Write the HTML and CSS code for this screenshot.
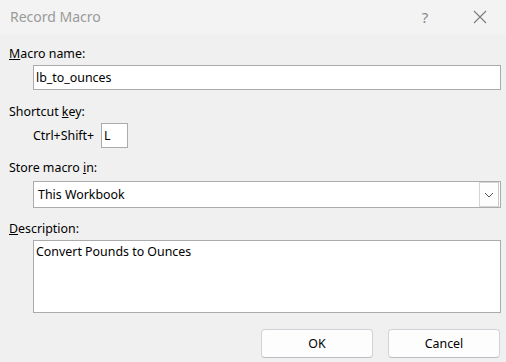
FILE: index.html
```html
<!DOCTYPE html>
<html>
<head>
<meta charset="utf-8">
<link rel="stylesheet" href="styles.css">
</head>
<body>
<div class="dialog">
  <div class="titlebar">
    <span class="title">Record Macro</span>
    <span class="help">?</span>
    <span class="close">
      <svg width="14" height="14" viewBox="0 0 14 14"><path d="M1 1 L13 13 M13 1 L1 13" stroke="#7a7a7a" stroke-width="1.1" fill="none"/></svg>
    </span>
  </div>
  <div class="content">
    <div class="label l1"><u>M</u>acro name:</div>
    <div class="field name">lb_to_ounces</div>
    <div class="label l2">Shortcut <u>k</u>ey:</div>
    <div class="shortcut">
      <span class="combo-text">Ctrl+Shift+</span>
      <div class="keybox">L</div>
    </div>
    <div class="label l3">Store macro <u>i</u>n:</div>
    <div class="field select">
      <span class="sel-text">This Workbook</span>
      <span class="drop">
        <svg width="10" height="6" viewBox="0 0 10 6"><path d="M1 1 L5 5 L9 1" stroke="#555" stroke-width="1" fill="none"/></svg>
      </span>
    </div>
    <div class="label l4"><u>D</u>escription:</div>
    <div class="field desc">Convert Pounds to Ounces</div>
    <div class="buttons">
      <div class="btn">OK</div>
      <div class="btn">Cancel</div>
    </div>
  </div>
</div>
</body>
</html>
```
FILE: styles.css
```css
html, body {
  margin: 0;
  padding: 0;
}
body {
  width: 506px;
  height: 362px;
  overflow: hidden;
  background: #f0f0f0;
  font-family: "Noto Sans", "Open Sans", sans-serif;
  font-size: 12.4px;
  color: #000;
}
.dialog {
  width: 506px;
  height: 362px;
  display: flex;
  flex-direction: column;
}
.titlebar {
  height: 34px;
  background: #f3f3f3;
  display: flex;
  align-items: center;
  padding-left: 10px;
  box-sizing: border-box;
}
.title {
  font-size: 14px;
  color: #9a9a9a;
  flex: 1;
  margin-top: -1px;
}
.help {
  font-size: 15px;
  color: #8a8a8a;
  width: 20px;
  text-align: center;
  margin-right: 38px;
  margin-top: -1px;
}
.close {
  width: 14px;
  height: 14px;
  margin-right: 19px;
  display: flex;
}
.content {
  display: flex;
  flex-direction: column;
  padding-left: 9px;
}
.label {
  height: 16px;
  line-height: 16px;
}
.l1 { margin-top: 12px; }
.l2 { margin-top: 14px; }
.l3 { margin-top: 12px; }
.l4 { margin-top: 13px; }
.field {
  margin-left: 24px;
  width: 468px;
  box-sizing: border-box;
  background: #fff;
  border: 1px solid #ababab;
}
.name {
  margin-top: 3px;
  height: 25px;
  line-height: 23px;
  padding-left: 2px;
}
.shortcut {
  margin-left: 24px;
  margin-top: 3px;
  display: flex;
  align-items: center;
  height: 25px;
}
.combo-text {
  width: 68px;
}
.keybox {
  width: 27px;
  height: 25px;
  box-sizing: border-box;
  background: #fff;
  border: 1px solid #ababab;
  line-height: 23px;
  padding-left: 2px;
}
.select {
  margin-top: 5px;
  height: 27px;
  display: flex;
  align-items: center;
  padding: 0 1px 0 4px;
}
.sel-text {
  flex: 1;
}
.drop {
  width: 20px;
  height: 25px;
  box-sizing: border-box;
  border: 1px solid #d5d5d5;
  border-right-color: #c8c8c8;
  background: #fdfdfd;
  display: flex;
  align-items: center;
  justify-content: center;
}
.desc {
  margin-top: 3px;
  height: 73px;
  padding: 3px 2px;
  line-height: 16px;
}
.buttons {
  display: flex;
  justify-content: flex-end;
  gap: 15px;
  margin-top: 16px;
  padding-right: 6px;
}
.btn {
  width: 112px;
  height: 29px;
  box-sizing: border-box;
  border: 1px solid #cfd3d8;
  border-bottom-color: #b9bec4;
  border-radius: 4px;
  background: #fdfdfd;
  text-align: center;
  line-height: 27px;
}
```
